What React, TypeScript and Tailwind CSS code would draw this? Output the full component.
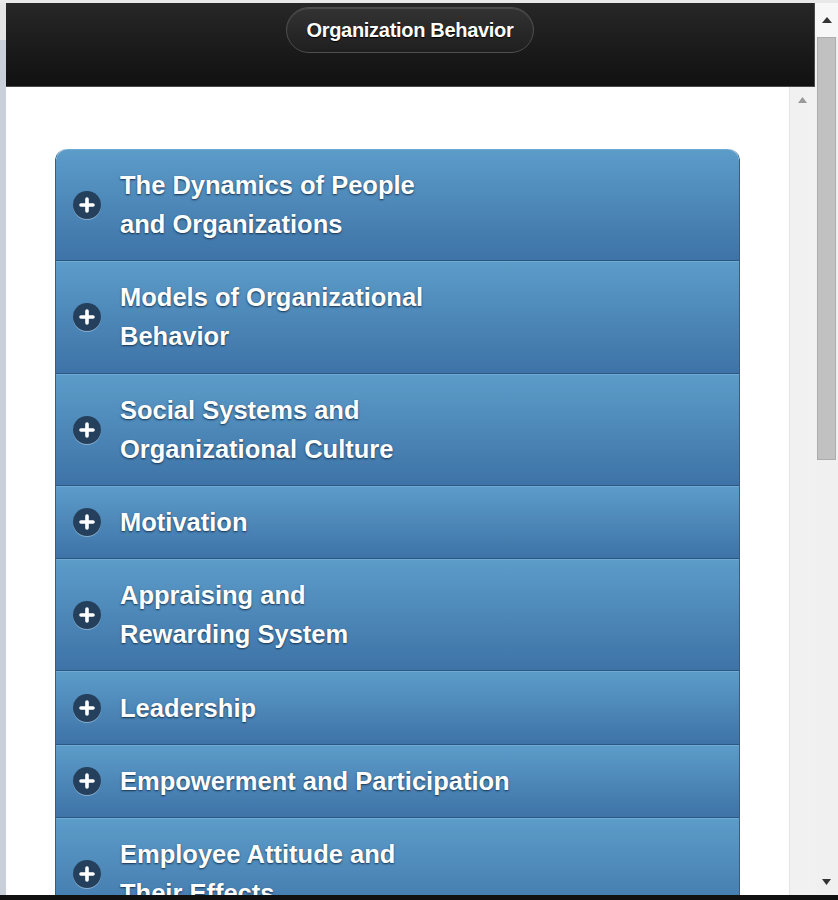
import { Fragment } from "react";

const chapters: string[][] = [
  ["The Dynamics of People", "and Organizations"],
  ["Models of Organizational", "Behavior"],
  ["Social Systems and", "Organizational Culture"],
  ["Motivation"],
  ["Appraising and", "Rewarding System"],
  ["Leadership"],
  ["Empowerment and Participation"],
  ["Employee Attitude and", "Their Effects"],
];

function PlusIcon() {
  return (
    <span className="flex h-[28px] w-[28px] shrink-0 items-center justify-center rounded-full bg-[#24405c] shadow-[0_1px_0_rgba(255,255,255,0.35)]">
      <svg width="16" height="16" viewBox="0 0 16 16">
        <path d="M8 2v12M2 8h12" stroke="#fff" strokeWidth="3.6" strokeLinecap="round" />
      </svg>
    </span>
  );
}

function ChapterRow({ lines, first }: { lines: string[]; first: boolean }) {
  return (
    <div
      className={`flex items-center gap-[19px] border-t border-b border-t-[#6eaad4] border-b-[#2c5783] bg-gradient-to-b from-[#5c9cc9] to-[#3e73a7] pl-[17px] pr-4 py-[16.15px] ${
        first ? "rounded-t-[12px]" : ""
      }`}
    >
      <PlusIcon />
      <div className="text-[25.5px] font-bold leading-[39px] text-white [text-shadow:0_1px_2px_#16314d]">
        {lines.map((l, i) => (
          <Fragment key={i}>
            {i > 0 && <br />}
            {l}
          </Fragment>
        ))}
      </div>
    </div>
  );
}

function Arrow({ up }: { up: boolean }) {
  return (
    <svg width="9" height="6" viewBox="0 0 9 6">
      <path d={up ? "M4.5 0L9 6H0z" : "M4.5 6L9 0H0z"} fill={up ? "#9a9a9a" : "#333"} />
    </svg>
  );
}

export default function App() {
  return (
    <div className="flex h-[900px] w-[838px] flex-col overflow-hidden bg-white font-['Liberation_Sans',Arial,sans-serif]">
      <div className="h-[3px] shrink-0 bg-[#e9e9e9]" />
      <div className="flex min-h-0 flex-1">
        {/* left frame strip */}
        <div className="flex w-[6px] shrink-0 flex-col">
          <div className="h-[37px] bg-[#e4e4e4]" />
          <div className="flex-1 bg-[#c9d0da]" />
        </div>

        {/* page */}
        <div className="flex min-w-0 flex-1 flex-col">
          <header className="flex h-[84px] shrink-0 justify-center border-r border-b border-[#4a4a4a] bg-gradient-to-b from-[#272727] to-[#111111] pt-[4px]">
            <div className="flex h-[46px] items-center rounded-full border border-[#4e4e4e] bg-gradient-to-b from-[#333333] to-[#1f1f1f] px-[19px] shadow-[inset_0_1px_0_rgba(255,255,255,0.12)]">
              <span className="text-[20px] font-bold tracking-[-0.3px] text-white [text-shadow:0_1px_1px_#000]">
                Organization Behavior
              </span>
            </div>
          </header>

          <div className="flex min-h-0 flex-1">
            <main className="min-w-0 flex-1 overflow-hidden bg-white px-[49px] pt-[62px]">
              <div className="overflow-hidden rounded-t-[12px] border-x border-[#2f5f8f]">
                {chapters.map((c, i) => (
                  <ChapterRow key={i} lines={c} first={i === 0} />
                ))}
              </div>
            </main>
            {/* inner scrollbar */}
            <div className="flex w-[26px] shrink-0 flex-col items-center border-l border-[#e4e4e4] bg-[#f1f1f1] pt-[10px]">
              <Arrow up />
            </div>
          </div>
        </div>

        {/* outer scrollbar */}
        <div className="flex w-[23px] shrink-0 flex-col bg-[#f0f0f0]">
          <div className="flex h-[34px] items-center justify-center bg-[#f7f7f7]">
            <svg width="10" height="6" viewBox="0 0 10 6">
              <path d="M5 0L10 6H0z" fill="#333" />
            </svg>
          </div>
          <div className="mx-[2px] h-[423px] border border-[#adadad] bg-[#c1c1c1]" />
          <div className="flex flex-1 items-end justify-center pb-[10px]">
            <Arrow up={false} />
          </div>
        </div>
      </div>
      <div className="h-[5px] shrink-0 bg-[#111]" />
    </div>
  );
}
